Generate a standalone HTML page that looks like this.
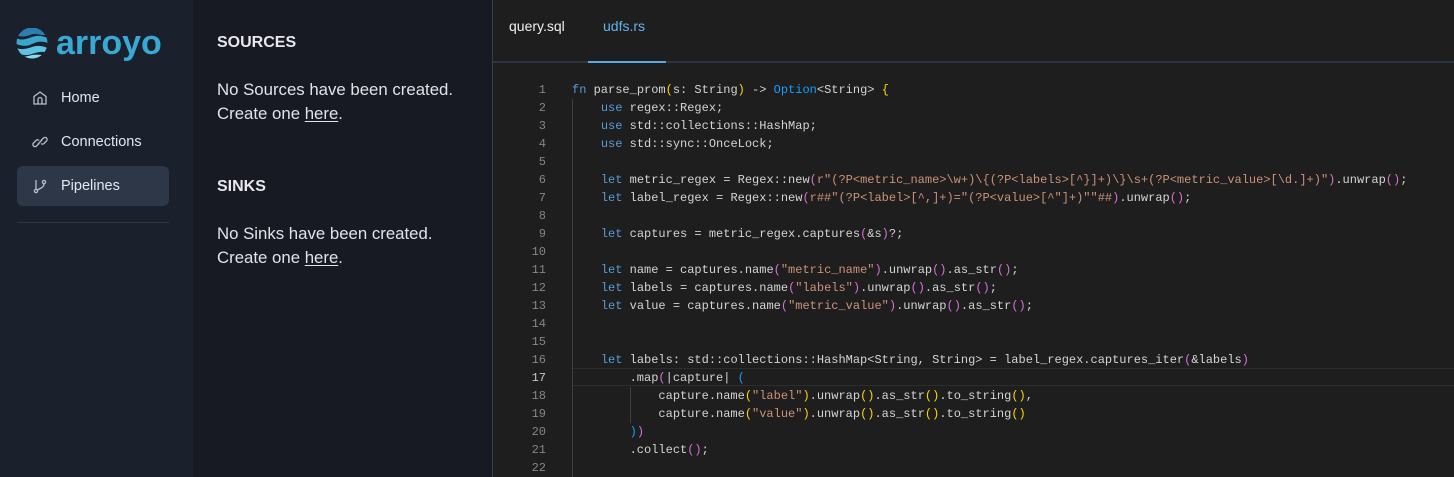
<!DOCTYPE html>
<html><head><meta charset="utf-8"><style>
*{margin:0;padding:0;box-sizing:border-box}
body{width:1454px;height:477px;overflow:hidden;background:#1e1e1e;font-family:"Liberation Sans",sans-serif;position:relative}
#side{position:absolute;left:0;top:0;width:193px;height:477px;background:#1a202c}
#mid{position:absolute;left:193px;top:0;width:299px;height:477px;background:#171923;color:#e8e8ec}
#ed{position:absolute;left:492px;top:0;right:0;height:477px;background:#1e1e1e;border-left:1px solid #3a3d45}
.nav{position:absolute;left:17px;width:152px;height:40px;color:#e2e8f0;font-size:14.5px;line-height:40px;padding-left:44px;border-radius:6px}
.nav svg{position:absolute;left:15px;top:12px}
.h{position:absolute;left:24px;font-weight:bold;font-size:16px}
.p{position:absolute;left:24px;font-size:16.8px;line-height:24px;color:#e2e2e8}
.p u{text-underline-offset:2px}
.tab{position:absolute;top:18px;font-size:14px}
.code{position:absolute;left:0;top:1px;font-family:"Liberation Mono",monospace;font-size:12px}
.ln{position:absolute;left:0;width:53px;text-align:right;color:#858585;height:18px;line-height:18px}
.l{position:absolute;left:79px;white-space:pre;color:#d4d4d4;height:18px;line-height:18px}
.k{color:#569cd6}.s{color:#ce9178}.y{color:#ffd700}.pu{color:#da70d6}.b{color:#179fff}.t{color:#4ec9b0}
.g{position:absolute;width:1px;background:#404040}
</style></head><body>
<div id="side">
<svg style="position:absolute;left:16px;top:26px" width="32" height="34" viewBox="0 0 32 34">
<defs><clipPath id="c"><circle cx="16" cy="17" r="15.5"/></clipPath></defs>
<g clip-path="url(#c)">
<path d="M0 2h32v6c-6 3-12-2-18 1c-5 2-9 2-14 0z" fill="#2a7fae"/>
<path d="M0 12c6 3 10 1 16-1c6-2 10-1 16 1v5c-6-2-10-2-16 1c-6 3-10 2-16 0z" fill="#3aa6d0"/>
<path d="M0 22c6 2 10 1 16-1c6-2 10-1 16 1v5c-6-2-10-1-16 1c-6 2-10 1-16-1z" fill="#5cc3e3"/>
<path d="M0 30c6 2 12 0 16-1c5-1 10 0 16 1v6H0z" fill="#8ad8ee"/>
</g></svg>
<div style="position:absolute;left:56px;top:21px;font-size:34px;font-weight:bold;color:#37a9d4;line-height:44px">arroyo</div>
<div class="nav" style="top:78px"><svg width="16" height="16" viewBox="0 0 16 16" fill="none" stroke="#b8bfcc" stroke-width="1.3"><path d="M2 14V6.5L8 2l6 4.5V14z"/><path d="M6 14V9.5a2 2 0 0 1 4 0V14"/></svg>Home</div>
<div class="nav" style="top:122px"><svg width="16" height="16" viewBox="0 0 16 16" fill="none" stroke="#b8bfcc" stroke-width="1.3"><path d="M7 9.5l-2.5 2.5a2 2 0 0 1-3-3L4 6.5a2 2 0 0 1 3 0"/><path d="M9 6.5l2.5-2.5a2 2 0 0 1 3 3L12 9.5a2 2 0 0 1-3 0"/><path d="M6 10l4-4"/></svg>Connections</div>
<div class="nav" style="top:166px;background:#2d3748"><svg width="16" height="16" viewBox="0 0 16 16" fill="none" stroke="#b8bfcc" stroke-width="1.3"><circle cx="4" cy="13" r="1.6"/><circle cx="12" cy="4" r="1.6"/><path d="M4 2v9.4M12 5.6c0 4-4 5-7 6.5"/></svg>Pipelines</div>
<div style="position:absolute;left:17px;top:222px;width:152px;height:1px;background:#2d3748"></div>
</div>
<div id="mid">
<div class="h" style="top:34px">SOURCES</div>
<div class="p" style="top:78px">No Sources have been created.<br>Create one <u>here</u>.</div>
<div class="h" style="top:178px">SINKS</div>
<div class="p" style="top:222px">No Sinks have been created.<br>Create one <u>here</u>.</div>
</div>
<div id="ed">
<div class="tab" style="left:16px;color:#f0f0f0">query.sql</div>
<div class="tab" style="left:110px;color:#63b3ed">udfs.rs</div>
<div style="position:absolute;left:0;right:0;top:61px;height:2px;background:#2e3440"></div>
<div style="position:absolute;left:95px;width:78px;top:61px;height:2px;background:#5aa9e6"></div>
<div style="position:absolute;left:79px;right:0;top:368px;height:18px;border-top:1px solid #2d2d2d;border-bottom:1px solid #2d2d2d"></div>
<div class="g" style="left:79px;top:99px;height:378px"></div>
<div class="g" style="left:137px;top:387px;height:36px"></div>
<div class="code">
<div class="ln" style="top:80px">1</div><div class="l" style="top:80px"><span class="k">fn</span> parse_prom<span class="y">(</span>s: String<span class="y">)</span> -&gt; <span class="b">Option</span>&lt;String&gt; <span class="y">{</span></div>
<div class="ln" style="top:98px">2</div><div class="l" style="top:98px">    <span class="k">use</span> regex::Regex;</div>
<div class="ln" style="top:116px">3</div><div class="l" style="top:116px">    <span class="k">use</span> std::collections::HashMap;</div>
<div class="ln" style="top:134px">4</div><div class="l" style="top:134px">    <span class="k">use</span> std::sync::OnceLock;</div>
<div class="ln" style="top:152px">5</div>
<div class="ln" style="top:170px">6</div><div class="l" style="top:170px">    <span class="k">let</span> metric_regex = Regex::new<span class="pu">(</span><span class="s">r"(?P&lt;metric_name&gt;\w+)\{(?P&lt;labels&gt;[^}]+)\}\s+(?P&lt;metric_value&gt;[\d.]+)"</span><span class="pu">)</span>.unwrap<span class="pu">()</span>;</div>
<div class="ln" style="top:188px">7</div><div class="l" style="top:188px">    <span class="k">let</span> label_regex = Regex::new<span class="pu">(</span><span class="s">r##"(?P&lt;label&gt;[^,]+)="(?P&lt;value&gt;[^"]+)""##</span><span class="pu">)</span>.unwrap<span class="pu">()</span>;</div>
<div class="ln" style="top:206px">8</div>
<div class="ln" style="top:224px">9</div><div class="l" style="top:224px">    <span class="k">let</span> captures = metric_regex.captures<span class="pu">(</span>&amp;s<span class="pu">)</span>?;</div>
<div class="ln" style="top:242px">10</div>
<div class="ln" style="top:260px">11</div><div class="l" style="top:260px">    <span class="k">let</span> name = captures.name<span class="pu">(</span><span class="s">"metric_name"</span><span class="pu">)</span>.unwrap<span class="pu">()</span>.as_str<span class="pu">()</span>;</div>
<div class="ln" style="top:278px">12</div><div class="l" style="top:278px">    <span class="k">let</span> labels = captures.name<span class="pu">(</span><span class="s">"labels"</span><span class="pu">)</span>.unwrap<span class="pu">()</span>.as_str<span class="pu">()</span>;</div>
<div class="ln" style="top:296px">13</div><div class="l" style="top:296px">    <span class="k">let</span> value = captures.name<span class="pu">(</span><span class="s">"metric_value"</span><span class="pu">)</span>.unwrap<span class="pu">()</span>.as_str<span class="pu">()</span>;</div>
<div class="ln" style="top:314px">14</div>
<div class="ln" style="top:332px">15</div>
<div class="ln" style="top:350px">16</div><div class="l" style="top:350px">    <span class="k">let</span> labels: std::collections::HashMap&lt;String, String&gt; = label_regex.captures_iter<span class="pu">(</span>&amp;labels<span class="pu">)</span></div>
<div class="ln" style="top:368px;color:#c6c6c6">17</div><div class="l" style="top:368px">        .map<span class="pu">(</span>|capture| <span class="b">(</span></div>
<div class="ln" style="top:386px">18</div><div class="l" style="top:386px">            capture.name<span class="y">(</span><span class="s">"label"</span><span class="y">)</span>.unwrap<span class="y">()</span>.as_str<span class="y">()</span>.to_string<span class="y">()</span>,</div>
<div class="ln" style="top:404px">19</div><div class="l" style="top:404px">            capture.name<span class="y">(</span><span class="s">"value"</span><span class="y">)</span>.unwrap<span class="y">()</span>.as_str<span class="y">()</span>.to_string<span class="y">()</span></div>
<div class="ln" style="top:422px">20</div><div class="l" style="top:422px">        <span class="b">)</span><span class="pu">)</span></div>
<div class="ln" style="top:440px">21</div><div class="l" style="top:440px">        .collect<span class="pu">()</span>;</div>
<div class="ln" style="top:458px">22</div>
</div>
</div>
</body></html>
